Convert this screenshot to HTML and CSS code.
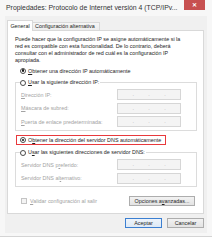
FILE: index.html
```html
<!DOCTYPE html>
<html lang="es">
<head>
<meta charset="utf-8">
<title>Propiedades</title>
<link rel="stylesheet" href="styles.css">
</head>
<body>
<div class="window">
  <div class="titlebar">
    <span class="title">Propiedades: Protocolo de Internet versión 4 (TCP/IPv...</span>
    <span class="close">✕</span>
  </div>
  <div class="client">
    <div class="tabs">
      <div class="tab active">General</div>
      <div class="tab">Configuración alternativa</div>
    </div>
    <div class="panel">
      <p class="desc">Puede hacer que la configuración IP se asigne automáticamente si la<br>red es compatible con esta funcionalidad. De lo contrario, deberá<br>consultar con el administrador de red cuál es la configuración IP<br>apropiada.</p>

      <div class="option"><span class="radio checked"></span><span><u>O</u>btener una dirección IP automáticamente</span></div>

      <fieldset class="group">
        <legend class="option"><span class="radio"></span><span><u>U</u>sar la siguiente dirección IP:</span></legend>
        <div class="field"><span class="label"><u>D</u>irección IP:</span><span class="ipbox"><i>.</i><i>.</i><i>.</i></span></div>
        <div class="field"><span class="label"><u>M</u>áscara de subred:</span><span class="ipbox"><i>.</i><i>.</i><i>.</i></span></div>
        <div class="field"><span class="label"><u>P</u>uerta de enlace predeterminada:</span><span class="ipbox"><i>.</i><i>.</i><i>.</i></span></div>
      </fieldset>

      <div class="option highlight"><span class="radio checked"></span><span>O<u>b</u>tener la dirección del servidor DNS automáticamente</span></div>

      <fieldset class="group dns">
        <legend class="option"><span class="radio"></span><span>U<u>s</u>ar las siguientes direcciones de servidor DNS:</span></legend>
        <div class="field"><span class="label">Servidor DNS p<u>r</u>eferido:</span><span class="ipbox"><i>.</i><i>.</i><i>.</i></span></div>
        <div class="field"><span class="label">Servidor DNS al<u>t</u>ernativo:</span><span class="ipbox"><i>.</i><i>.</i><i>.</i></span></div>
      </fieldset>

      <div class="footer">
        <div class="check-row"><span class="checkbox"></span><span><u>V</u>alidar configuración al salir</span></div>
        <button class="btn advanced">Opciones a<u>v</u>anzadas...</button>
      </div>
    </div>
    <div class="actions">
      <button class="btn default">Aceptar</button>
      <button class="btn">Cancelar</button>
    </div>
  </div>
</div>
</body>
</html>
```

FILE: styles.css
```css
* { box-sizing: border-box; }
html, body { margin: 0; padding: 0; }
body {
  width: 212px;
  height: 237px;
  overflow: hidden;
  font-family: "Liberation Sans", Arial, sans-serif;
  font-size: 5.4px;
  color: #1e1e1e;
  background: #f6f6f6;
}
u { text-decoration-thickness: 0.5px; text-underline-offset: 0.6px; }

.window {
  width: 212px;
  height: 237px;
  background: #f7f7f7;
  display: flex;
  flex-direction: column;
  border-bottom: 1px solid #d4d4d4;
}

.titlebar {
  height: 16px;
  display: flex;
  align-items: flex-start;
  flex-shrink: 0;
}
.title {
  padding-left: 6px;
  line-height: 16px;
  font-size: 6.9px;
  color: #333;
  white-space: nowrap;
}
.close {
  margin-left: auto;
  margin-right: 7px;
  width: 21px;
  height: 10px;
  background: #c75050;
  color: #fff;
  font-size: 6px;
  line-height: 10px;
  text-align: center;
  font-weight: bold;
}

.client {
  flex: 1;
  margin: 0 5px 3px;
  background: #f0f0f0;
  padding: 4px 3px 0 2px;
  display: flex;
  flex-direction: column;
}

.tabs {
  display: flex;
  align-items: flex-start;
  height: 10px;
  position: relative;
  z-index: 1;
}
.tab {
  border: 1px solid #d9d9d9;
  border-bottom: none;
  white-space: nowrap;
}
.tab.active {
  height: 11px;
  width: 26px;
  background: #fff;
  line-height: 10px;
  text-align: center;
  color: #222;
}
.tab:not(.active) {
  margin-top: 2px;
  height: 8px;
  line-height: 7px;
  padding: 0 2px;
  width: 67px;
  border-left: none;
  background: linear-gradient(#f6f6f6, #ececec);
  color: #222;
}

.panel {
  height: 184px;
  border: 1px solid #d9d9d9;
  background: #fff;
  padding: 4.5px 0 0 0;
}

.desc {
  margin: 0 0 0 7px;
  line-height: 7px;
  white-space: nowrap;
}

.option {
  display: flex;
  align-items: center;
  gap: 2px;
  height: 9px;
  white-space: nowrap;
}
.panel > .option:first-of-type {
  margin: 2.5px 0 0 12px;
}

.radio {
  width: 6px;
  height: 6px;
  border: 1px solid #4a4a4a;
  border-radius: 50%;
  background: #fff;
  display: flex;
  align-items: center;
  justify-content: center;
  flex-shrink: 0;
}
.radio.checked::after {
  content: "";
  width: 2.4px;
  height: 2.4px;
  border-radius: 50%;
  background: #111;
}

.group {
  margin: 3px 6px 0 7px;
  border: 1px solid #dcdcdc;
  padding: 2px 15px 3px 5px;
  min-width: 0;
}
.group legend {
  padding: 0 1px 0 0;
  margin-left: -1px;
  line-height: 9px;
}
.dns { margin-top: 3.5px; padding-top: 2.3px; padding-bottom: 2px; }

.field {
  display: flex;
  align-items: center;
  justify-content: space-between;
  height: 11px;
  color: #a3a3a3;
  white-space: nowrap;
}
.field + .field { margin-top: 2.5px; }
.ipbox {
  width: 64px;
  height: 11px;
  border: 1px solid #d6d6d6;
  background: #f4f4f4;
  display: flex;
  justify-content: space-evenly;
  align-items: center;
  color: #9a9a9a;
  font-style: normal;
}
.ipbox i { font-style: normal; line-height: 6px; margin-top: -1px; }

.highlight {
  margin: 4px 0 0 8px;
  width: 150px;
  height: 9.5px;
  border: 1px solid #e8393c;
  padding-left: 3px;
}

.footer {
  display: flex;
  align-items: center;
  justify-content: space-between;
  margin: 9.5px 8px 0 13px;
  height: 10px;
}
.check-row {
  display: flex;
  align-items: center;
  gap: 3px;
  color: #a3a3a3;
  white-space: nowrap;
}
.checkbox {
  width: 6px;
  height: 6px;
  border: 1px solid #c4c4c4;
  background: #f4f4f4;
}

.btn {
  font-family: inherit;
  font-size: 5.4px;
  color: #1e1e1e;
  height: 10px;
  padding: 0;
  border: 1px solid #adadad;
  background: linear-gradient(#f2f2f2, #e3e3e3);
  white-space: nowrap;
}
.advanced { width: 66px; }

.actions {
  display: flex;
  justify-content: flex-end;
  gap: 5px;
  margin-top: 4px;
}
.actions .btn { width: 37px; }
.btn.default { border-color: #3c7fd1; background: linear-gradient(#eef4fb, #dde9f6); }
```
